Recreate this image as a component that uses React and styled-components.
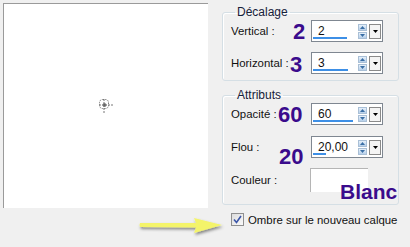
import React from 'react'
import styled, { createGlobalStyle } from 'styled-components'

const Global = createGlobalStyle`
    html, body {
        margin: 0;
        padding: 0;
        background: #f0f0f0;
        width: 410px;
        height: 247px;
        overflow: hidden;
    }
    body {
        font-family: "Liberation Sans", Arial, sans-serif;
        font-size: 11.4px;
        color: #111;
    }
`

const Page = styled.div`
    position: relative;
    display: flex;
    align-items: flex-start;
    padding: 3px 0 0 3px;
    width: 410px;
    height: 247px;
    box-sizing: border-box;
`
const Preview = styled.div`
    width: 204px;
    height: 204px;
    background: #fff;
    border-left: 1px solid #9a9a9a;
    border-top: 1px solid #9a9a9a;
    display: flex;
    align-items: center;
    justify-content: center;
`
const Side = styled.div`
    margin-left: 14px;
    width: 177px;
    display: flex;
    flex-direction: column;
`
const Group = styled.fieldset`
    min-width: 0;
    margin: ${p => p.$top}px 0 0 0;
    padding: 1px 0 0 8px;
    border: 1px solid #d5dfe5;
    border-radius: 3px;
    box-shadow: inset 1px 1px 0 #fff;
    height: ${p => p.$height}px;
    box-sizing: border-box;
    display: flex;
    flex-direction: column;
    gap: ${p => p.$gap}px;
`
const Legend = styled.legend`
    padding: 0 2px;
    margin-left: 4px;
    color: #16213a;
    font-size: 12px;
    line-height: 14px;
`
const Row = styled.div`
    position: relative;
    display: flex;
    align-items: center;
    height: 22px;
`
const Label = styled.span`
    width: 79px;
    flex: none;
    white-space: nowrap;
`
const Mark = styled.span`
    position: absolute;
    left: ${p => p.$x}px;
    top: ${p => p.$y}px;
    font-family: "Liberation Sans", Arial, sans-serif;
    font-weight: 700;
    font-size: ${p => p.$size || 22}px;
    line-height: 1;
    color: #3a0b8c;
`
const Spin = styled.div`
    position: relative;
    margin-left: auto;
    margin-right: 15px;
    width: 72px;
    height: 22px;
    flex: none;
    box-sizing: border-box;
    border: 1px solid #7f8791;
    background: #fff;
    display: flex;
    align-items: center;
`
const Value = styled.span`
    padding-left: 6px;
    flex: 1;
    font-size: 12px;
`
const Bar = styled.div`
    position: absolute;
    left: 1px;
    bottom: 2px;
    height: 2px;
    background: #3d8fe6;
`
const Arrows = styled.div`
    display: flex;
    flex-direction: column;
    gap: 1px;
    width: 9px;
    margin-right: 2px;
`
const ArrowBtn = styled.div`
    height: 7px;
    background: linear-gradient(#e6f0fa, #b7d0ea);
    border: 1px solid #a9bfd6;
    box-sizing: border-box;
    display: flex;
    align-items: center;
    justify-content: center;
`
const Drop = styled.div`
    width: 12px;
    height: 15px;
    margin-right: 1px;
    box-sizing: border-box;
    border: 1px solid #8a8a8a;
    background: #f4f4f4;
    display: flex;
    align-items: center;
    justify-content: center;
`
const Swatch = styled.div`
    flex: none;
    width: 57px;
    height: 23px;
    background: #fff;
    border-top: 1px solid #b5b5b5;
    border-left: 1px solid #b5b5b5;
`
const CheckRow = styled.label`
    display: flex;
    align-items: center;
    margin: 8px 0 0 9px;
    gap: 4px;
    white-space: nowrap;
`
const Box = styled.span`
    width: 13px;
    height: 13px;
    box-sizing: border-box;
    border: 1px solid #8f8f8f;
    background: linear-gradient(135deg, #dcdcdc, #fafafa);
    display: flex;
    align-items: center;
    justify-content: center;
`
const Pointer = styled.svg`
    position: absolute;
    left: 136px;
    top: 214px;
`

const SpinBox = ({ value, bar }) => (
    <Spin>
        <Value>{value}</Value>
        <Bar style={{ width: bar }} />
        <Arrows>
            <ArrowBtn>
                <svg width="5" height="3"><path d="M0 3 L2.5 0 L5 3 Z" fill="#3a6ea5" /></svg>
            </ArrowBtn>
            <ArrowBtn>
                <svg width="5" height="3"><path d="M0 0 L2.5 3 L5 0 Z" fill="#3a6ea5" /></svg>
            </ArrowBtn>
        </Arrows>
        <Drop>
            <svg width="5" height="3"><path d="M0 0 L5 0 L2.5 3 Z" fill="#000" /></svg>
        </Drop>
    </Spin>
)

const App = () => {
    return (
        <Page>
            <Global />
            <Preview>
                <svg width="16" height="16" viewBox="0 0 16 16">
                    <g stroke="#777" strokeWidth="1" fill="none">
                        <rect x="1.5" y="1.5" width="9" height="9" rx="3" strokeDasharray="1.5 1" />
                        <path d="M6 1 v14 M1 7 h14" strokeDasharray="2 1" />
                        <circle cx="6.5" cy="7" r="1.5" fill="#666" />
                    </g>
                </svg>
            </Preview>
            <Side>
                <Group $top={2} $height={76} $gap={10}>
                    <Legend>Décalage</Legend>
                    <Row>
                        <Label>Vertical :</Label>
                        <Mark $x={62} $y={1}>2</Mark>
                        <SpinBox value="2" bar={34} />
                    </Row>
                    <Row>
                        <Label>Horizontal :</Label>
                        <Mark $x={59} $y={2}>3</Mark>
                        <SpinBox value="3" bar={35} />
                    </Row>
                </Group>
                <Group $top={7} $height={117} $gap={11}>
                    <Legend>Attributs</Legend>
                    <Row>
                        <Label>Opacité :</Label>
                        <Mark $x={47} $y={1}>60</Mark>
                        <SpinBox value="60" bar={40} />
                    </Row>
                    <Row>
                        <Label>Flou :</Label>
                        <Mark $x={48} $y={10}>20</Mark>
                        <SpinBox value="20,00" bar={13} />
                    </Row>
                    <Row>
                        <Label>Couleur :</Label>
                        <Swatch />
                        <Mark $x={109} $y={12} $size={21}>Blanc</Mark>
                    </Row>
                </Group>
                <CheckRow>
                    <Box>
                        <svg width="9" height="9" viewBox="0 0 9 9">
                            <path d="M1 4.5 L3.5 7.5 L8 1" stroke="#3a55a8" strokeWidth="1.6" fill="none" />
                        </svg>
                    </Box>
                    <span>Ombre sur le nouveau calque</span>
                </CheckRow>
            </Side>
            <Pointer width="92" height="26" viewBox="0 0 92 26">
                <defs>
                    <filter id="sh" x="-10%" y="-30%" width="130%" height="180%">
                        <feDropShadow dx="1" dy="2" stdDeviation="1.5" floodColor="#000" floodOpacity="0.45" />
                    </filter>
                </defs>
                <path d="M4 9 Q3 11 4 13 L60 13.5 L58 19 L86 11 L58 4 L60 9 Z" fill="#f4f46a" filter="url(#sh)" />
            </Pointer>
        </Page>
    )
}

export default App
